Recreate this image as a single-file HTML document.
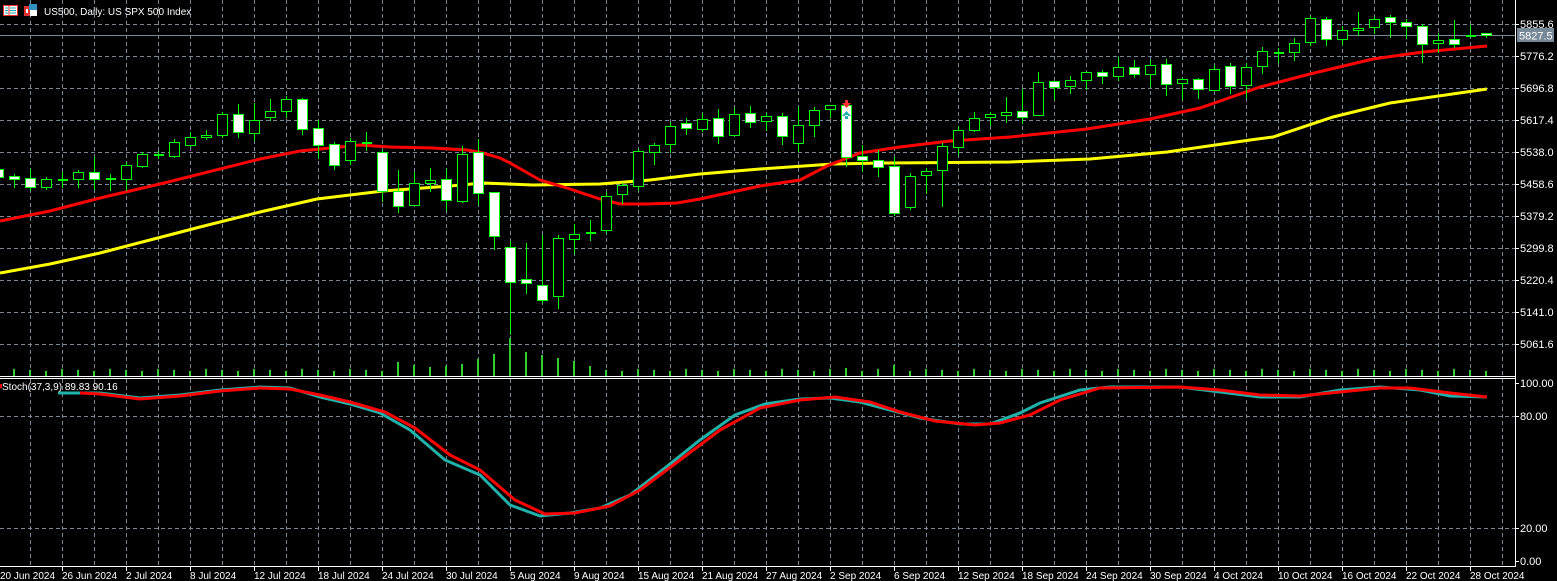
<!DOCTYPE html>
<html><head><meta charset="utf-8"><style>
html,body{margin:0;padding:0;background:#000;width:1557px;height:581px;overflow:hidden}
svg{display:block}
text{font-family:"Liberation Sans",sans-serif;fill:#fff}
</style></head><body>
<svg id="s" width="1557" height="581" xmlns="http://www.w3.org/2000/svg">
<rect width="1557" height="581" fill="#000"/>
<g id="grid" stroke="#778899" stroke-width="1" stroke-dasharray="4,3"></g>
<line x1="0" y1="35.5" x2="1515" y2="35.5" stroke="#778899"/>
<g id="vol" fill="#32cd32"></g>
<polyline fill="none" stroke="#ffff00" stroke-width="3" points="0,273 50,264 100,253 150,240 200,227 260,212 317,199 383,191 450,186 483,183 533,185 600,184 650,180 700,174 760,169 833,164 883,163 1010,162 1090,159 1167,152 1250,140 1273,137 1333,117 1390,103 1487,89"/>
<polyline fill="none" stroke="#ff0000" stroke-width="3" points="0,221 50,211 100,198 160,184 260,159 300,151 360,145 390,147 433,148 467,150 483,153 500,158 510,163 540,180 567,188 600,199 620,204 647,204 677,203 700,199 760,186 800,180 827,166 860,153 900,147 950,141 1010,137 1087,129 1150,119 1200,108 1260,87 1310,74 1373,59 1423,52 1487,46"/>
<g id="candles"></g>
<path d="M842 103h9l-4.5 5z M845 100h3v4h-3z" fill="#ff3030"/>
<path d="M842 116h9l-4.5-5z M845 115h3v4h-3z" fill="#20b2aa"/>
<polyline fill="none" stroke="#20b2aa" stroke-width="3" points="58,393 100,393 140,398 180,395 220,390 260,387 290,388 320,397 350,404 380,413 410,430 445,460 480,475 510,505 540,516 570,513 600,508 630,495 665,468 700,440 735,415 765,404 800,399 830,398 860,402 890,410 920,418 960,424 990,424 1020,413 1040,403 1080,390 1110,387 1180,387 1220,392 1260,397 1300,397 1340,390 1380,387 1420,390 1450,396 1487,397"/>
<polyline fill="none" stroke="#ff0000" stroke-width="3" points="80,393 100,394 140,399 180,396 220,391 260,388 290,389 320,395 350,402 385,412 415,428 450,455 480,470 515,500 545,514 575,513 610,506 640,490 680,460 720,430 760,408 800,400 835,397 870,402 900,412 935,421 975,425 1000,423 1030,415 1060,400 1100,388 1180,387 1220,390 1260,395 1300,396 1340,392 1380,388 1410,388 1450,393 1487,397"/>
<g stroke="#fff" stroke-width="1">
<line x1="0" y1="376.5" x2="1516" y2="376.5"/>
<line x1="0" y1="378.5" x2="1516" y2="378.5"/>
<line x1="0" y1="566.5" x2="1516" y2="566.5"/>
<line x1="1515.5" y1="0" x2="1515.5" y2="567"/>
</g>
<g id="ticks" stroke="#fff"></g>
<rect x="1517" y="28" width="37" height="14" fill="#778899"/>
<g font-size="11">
<text x="1520" y="28">5855.6</text>
<text x="1519" y="39.5" fill="#fff">5827.5</text>
<text x="1520" y="60">5776.2</text>
<text x="1520" y="92">5696.8</text>
<text x="1520" y="124">5617.4</text>
<text x="1520" y="156">5538.0</text>
<text x="1520" y="188">5458.6</text>
<text x="1520" y="220">5379.2</text>
<text x="1520" y="252">5299.8</text>
<text x="1520" y="284">5220.4</text>
<text x="1520" y="316">5141.0</text>
<text x="1520" y="348">5061.6</text>
<text x="1520" y="387">100.00</text>
<text x="1520" y="420">80.00</text>
<text x="1520" y="532">20.00</text>
<text x="1520" y="565">0.00</text>
</g>
<g font-size="10">
<text x="0" y="579">20 Jun 2024</text><text x="62" y="579">26 Jun 2024</text><text x="126" y="579">2 Jul 2024</text><text x="190" y="579">8 Jul 2024</text><text x="254" y="579">12 Jul 2024</text><text x="318" y="579">18 Jul 2024</text><text x="382" y="579">24 Jul 2024</text><text x="446" y="579">30 Jul 2024</text><text x="510" y="579">5 Aug 2024</text><text x="574" y="579">9 Aug 2024</text><text x="638" y="579">15 Aug 2024</text><text x="702" y="579">21 Aug 2024</text><text x="766" y="579">27 Aug 2024</text><text x="830" y="579">2 Sep 2024</text><text x="894" y="579">6 Sep 2024</text><text x="958" y="579">12 Sep 2024</text><text x="1022" y="579">18 Sep 2024</text><text x="1086" y="579">24 Sep 2024</text><text x="1150" y="579">30 Sep 2024</text><text x="1214" y="579">4 Oct 2024</text><text x="1278" y="579">10 Oct 2024</text><text x="1342" y="579">16 Oct 2024</text><text x="1406" y="579">22 Oct 2024</text><text x="1470" y="579">28 Oct 2024</text>
</g>
<text x="2" y="390" font-size="10">Stoch(37,3,9) 89.83 90.16</text>
<rect x="0" y="384" width="2" height="4" fill="#f00"/>
<text x="44" y="15" font-size="10">US500, Daily:  US SPX 500 Index</text>
<g>
<rect x="3.5" y="5.5" width="14" height="10" fill="#fff" stroke="#e03030"/>
<line x1="9" y1="6" x2="9" y2="15" stroke="#e03030"/>
<path d="M5 8h3M5 10.5h3M5 13h3M10 8h6M10 10.5h6M10 13h6" stroke="#20a0b0" stroke-width="1"/>
<rect x="24" y="6" width="6" height="10" fill="#e03030"/>
<rect x="29" y="4" width="8" height="6" fill="#3090c0"/>
<rect x="30" y="10" width="7" height="6" fill="#fff"/>
<rect x="26" y="9" width="2" height="4" fill="#fff"/>
</g>
</svg>
<script>
(function(){
var NS="http://www.w3.org/2000/svg";
function el(p,t,a){var e=document.createElementNS(NS,t);for(var k in a)e.setAttribute(k,a[k]);p.appendChild(e);return e;}
var g=document.getElementById("grid");
for(var x=30;x<1515;x+=32){el(g,"line",{x1:x+.5,y1:0,x2:x+.5,y2:376});el(g,"line",{x1:x+.5,y1:379,x2:x+.5,y2:566});}
for(var y=24;y<=344;y+=32){el(g,"line",{x1:0,y1:y+.5,x2:1515,y2:y+.5});}
[416,528].forEach(function(y){el(g,"line",{x1:0,y1:y+.5,x2:1515,y2:y+.5});});
var t=document.getElementById("ticks");
[24,56,88,120,152,184,216,248,280,312,344,383,416,528,561].forEach(function(y){el(t,"line",{x1:1515,y1:y+.5,x2:1519,y2:y+.5});});
for(var k=1;k<24;k++){var xx=64*k-2;el(t,"line",{x1:xx+.5,y1:566,x2:xx+.5,y2:571});}
var D=[[-2,169,177,166,179,1],[14,176,179,174,187,1],[30,178,187,169,190,1],[46,179,187,177,189,0],[62,179,179,172,187,0],[78,172,179,170,187,0],[94,172,179,157,189,1],[110,178,178,174,190,0],[126,165,179,162,190,0],[142,154,166,152,167,0],[158,154,154,151,158,0],[174,142,156,139,157,0],[190,137,145,132,146,0],[206,135,137,130,139,0],[222,114,135,112,137,0],[238,114,132,104,137,1],[254,120,133,103,140,0],[270,111,117,99,120,0],[286,99,111,96,117,0],[302,99,129,98,134,1],[318,128,145,120,158,1],[334,144,165,142,169,1],[350,141,160,138,164,0],[366,142,142,132,150,0],[382,152,191,150,201,1],[398,191,206,170,212,1],[414,183,205,172,205,0],[430,180,183,168,191,0],[446,179,200,169,210,1],[462,154,201,146,202,0],[478,152,193,139,204,1],[494,192,236,192,249,1],[510,247,282,241,334,1],[526,279,283,243,293,1],[542,285,300,235,302,1],[558,238,296,235,308,0],[574,234,239,224,253,0],[590,232,232,220,240,0],[606,196,230,192,232,0],[622,185,194,183,203,0],[638,151,186,149,190,0],[654,145,152,143,164,0],[670,126,144,122,152,0],[686,123,128,118,134,1],[702,119,129,113,131,0],[718,118,136,109,143,1],[734,114,135,108,135,0],[750,113,122,106,127,1],[766,116,121,113,130,0],[782,116,136,113,144,1],[798,125,143,107,151,0],[814,110,125,107,136,0],[830,105,109,105,117,0],[846,105,157,105,166,1],[862,156,160,145,171,1],[878,160,167,150,176,1],[894,166,213,157,215,1],[910,176,207,173,209,0],[926,171,175,168,193,0],[942,146,170,143,206,0],[958,130,147,126,154,0],[974,118,130,112,131,0],[990,114,117,112,125,0],[1006,112,115,97,122,0],[1022,111,117,89,123,1],[1038,82,115,72,115,0],[1054,81,87,81,99,1],[1070,80,86,76,93,0],[1086,72,80,72,89,0],[1102,72,76,70,83,1],[1118,67,76,57,80,0],[1134,67,74,60,77,1],[1150,65,74,60,86,0],[1166,64,84,59,95,1],[1182,79,83,78,99,0],[1198,79,89,78,98,1],[1214,69,90,65,90,0],[1230,66,86,63,93,1],[1246,67,85,63,97,0],[1262,51,66,47,73,0],[1278,52,52,48,62,0],[1294,43,52,38,60,0],[1310,18,42,16,45,0],[1326,19,39,17,45,1],[1342,30,39,26,44,0],[1358,28,30,12,35,0],[1374,19,27,17,33,0],[1390,17,22,15,37,1],[1406,22,26,19,38,1],[1422,26,44,24,62,1],[1438,40,43,33,52,0],[1454,39,44,20,47,1],[1470,35,35,25,35,0],[1486,33,35,33,37,1]];
var VX={494:354,478:359,462:364,446:366,430:367,414:365,398:362,510:338,526:352,542:355,558:358,574:361,590:366,846:368,894:365};
var c=document.getElementById("candles"),v=document.getElementById("vol");
D.forEach(function(d){
var x=d[0],top=d[1],bot=d[2],hi=d[3],lo=d[4],w=d[5];
el(c,"line",{x1:x+.5,y1:hi,x2:x+.5,y2:lo+1,stroke:"#00ff00","stroke-width":1});
if(bot-top<2){el(c,"rect",{x:x-4,y:top,width:10,height:2,fill:"#00ff00"});}
else el(c,"rect",{x:x-4.5,y:top+.5,width:10,height:bot-top,fill:w?"#fff":"#000",stroke:"#00ff00","stroke-width":1});
var vt=VX[x]||(368+((x/16)%3));
el(v,"rect",{x:x-1,y:vt,width:2,height:376-vt});
});
})();
</script>
</body></html>
